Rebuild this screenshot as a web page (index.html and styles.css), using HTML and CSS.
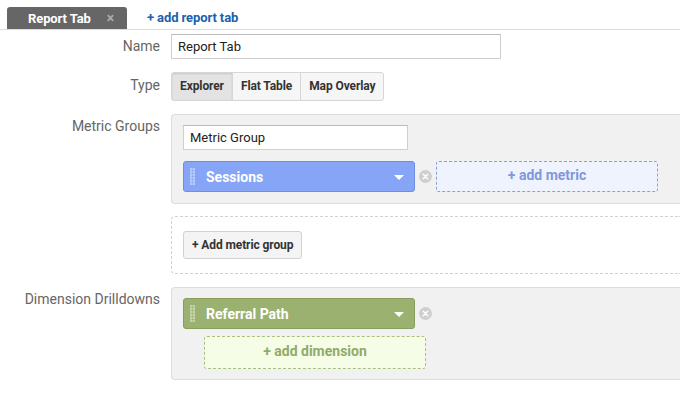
FILE: index.html
```html
<!DOCTYPE html>
<html>
<head>
<meta charset="utf-8">
<link rel="stylesheet" href="styles.css">
</head>
<body>
<div class="tabbar">
  <div class="tab"><span class="tab-name">Report Tab</span><span class="tab-x">×</span></div>
  <a class="add-tab">+ add report tab</a>
</div>
<div class="form">
  <div class="row row-name">
    <div class="label">Name</div>
    <div class="field"><div class="input input-name">Report Tab</div></div>
  </div>
  <div class="row row-type">
    <div class="label">Type</div>
    <div class="field">
      <div class="seg">
        <span class="seg-btn active">Explorer</span><span class="seg-btn">Flat Table</span><span class="seg-btn">Map Overlay</span>
      </div>
    </div>
  </div>
  <div class="row row-metrics">
    <div class="label">Metric Groups</div>
    <div class="field">
      <div class="panel panel-metric">
        <div class="input input-group">Metric Group</div>
        <div class="chip-row">
          <div class="chip chip-blue">
            <span class="grip"></span><span class="chip-text">Sessions</span><span class="caret"></span>
          </div>
          <span class="remove"><svg viewBox="0 0 13 13" width="13" height="13"><circle cx="6.5" cy="6.5" r="6.5" fill="#cfcfcf"/><path d="M4.3 4.3 L8.7 8.7 M8.7 4.3 L4.3 8.7" stroke="#fff" stroke-width="1.5" stroke-linecap="round"/></svg></span>
          <div class="adder adder-blue">+ add metric</div>
        </div>
      </div>
    </div>
  </div>
  <div class="row row-addgroup">
    <div class="label"></div>
    <div class="field">
      <div class="panel-dashed">
        <span class="btn">+ Add metric group</span>
      </div>
    </div>
  </div>
  <div class="row row-dims">
    <div class="label">Dimension Drilldowns</div>
    <div class="field">
      <div class="panel panel-dim">
        <div class="chip-row">
          <div class="chip chip-green">
            <span class="grip"></span><span class="chip-text">Referral Path</span><span class="caret"></span>
          </div>
          <span class="remove"><svg viewBox="0 0 13 13" width="13" height="13"><circle cx="6.5" cy="6.5" r="6.5" fill="#cfcfcf"/><path d="M4.3 4.3 L8.7 8.7 M8.7 4.3 L4.3 8.7" stroke="#fff" stroke-width="1.5" stroke-linecap="round"/></svg></span>
        </div>
        <div class="adder adder-green">+ add dimension</div>
      </div>
    </div>
  </div>
</div>
</body>
</html>
```
FILE: styles.css
```css
html, body {
  margin: 0;
  padding: 0;
  background: #fff;
  font-family: Roboto, "Liberation Sans", Arial, sans-serif;
  color: #333;
  overflow: hidden;
}
.tabbar {
  display: flex;
  align-items: flex-end;
  padding: 7px 0 0 7px;
  height: 22px;
  border-bottom: 1px solid #dcdcdc;
}
.tab {
  width: 120px;
  height: 22px;
  box-sizing: border-box;
  background: #666;
  border-radius: 3px 3px 0 0;
  display: flex;
  align-items: center;
  padding-left: 21px;
  color: #fff;
  font-weight: 700;
  font-size: 13px;
  letter-spacing: -0.1px;
}
.tab-x {
  color: #aaa;
  font-size: 14px;
  margin-left: 16px;
  font-weight: 700;
}
.add-tab {
  color: #2060ae;
  font-weight: 700;
  font-size: 13px;
  margin-left: 20px;
  height: 22px;
  line-height: 22px;
  letter-spacing: -0.1px;
}
.form {
  display: flex;
  flex-direction: column;
}
.row {
  display: flex;
}
.label {
  width: 161px;
  box-sizing: border-box;
  padding-right: 1px;
  text-align: right;
  color: #666;
  font-size: 14px;
  flex-shrink: 0;
}
.field {
  flex: 1;
  padding-left: 10px;
}
.row-name { margin-top: 4px; }
.row-name .label { line-height: 25px; }
.input {
  box-sizing: border-box;
  height: 25px;
  border: 1px solid #cfcfcf;
  border-top-color: #bbb;
  background: #fff;
  font-size: 13px;
  color: #222;
  padding-left: 6px;
  line-height: 23px;
}
.input-name { width: 330px; }
.row-type { margin-top: 13px; }
.row-type .label { line-height: 26px; }
.seg {
  display: inline-flex;
  height: 29px;
}
.seg-btn {
  box-sizing: border-box;
  height: 29px;
  line-height: 27px;
  border: 1px solid #d6d6d6;
  background: #f6f6f6;
  font-size: 12px;
  font-weight: 700;
  color: #333;
  padding: 0 8px;
  margin-left: -1px;
  letter-spacing: -0.1px;
}
.seg-btn:first-child { margin-left: 0; border-radius: 3px 0 0 3px; }
.seg-btn:last-child { border-radius: 0 3px 3px 0; }
.seg-btn.active {
  background: #e3e3e3;
  box-shadow: inset 0 1px 2px rgba(0,0,0,0.12);
}
.row-metrics { margin-top: 13px; }
.row-metrics .label, .row-dims .label { padding-top: 4px; line-height: 17px; }
.panel {
  background: #f1f1f1;
  border: 1px solid #dcdcdc;
  border-right: none;
  border-radius: 4px 0 0 4px;
  box-sizing: border-box;
  padding: 10px 0 11px 11px;
}
.input-group { width: 225px; margin-bottom: 11px; }
.chip-row {
  display: flex;
  align-items: center;
}
.chip {
  box-sizing: border-box;
  width: 232px;
  height: 31px;
  border-radius: 3px;
  display: flex;
  align-items: center;
  color: #fff;
  font-weight: 700;
  font-size: 14px;
}
.chip-blue {
  background: #86a5f6;
  border: 1px solid #6f8ee0;
}
.chip-green {
  background: #9bb16f;
  border: 1px solid #879d5d;
}
.grip {
  width: 5px;
  height: 17px;
  margin-left: 6px;
  margin-right: 11px;
  background-image: radial-gradient(circle, rgba(255,255,255,0.7) 0.9px, transparent 1.2px);
  background-size: 3px 3px;
  background-position: -0.5px -0.5px;
}
.chip-text { flex: 1; }
.caret {
  width: 0;
  height: 0;
  border-left: 5px solid transparent;
  border-right: 5px solid transparent;
  border-top: 5px solid #fff;
  margin-right: 10px;
  margin-top: 2px;
}
.remove {
  width: 13px;
  height: 13px;
  margin-left: 4px;
  display: flex;
}
.adder {
  box-sizing: border-box;
  height: 31px;
  border-radius: 3px;
  font-weight: 700;
  font-size: 14px;
  text-align: center;
}
.adder-blue {
  width: 222px;
  margin-left: 4px;
  background: #eef3fd;
  border: 1px dashed #8c9fd8;
  color: #8198db;
  line-height: 27px;
}
.row-addgroup { margin-top: 12px; }
.panel-dashed {
  box-sizing: border-box;
  height: 58px;
  border: 1px dashed #d2d2d2;
  border-right: none;
  border-radius: 4px 0 0 4px;
  padding: 14px 0 0 11px;
}
.btn {
  display: inline-block;
  box-sizing: border-box;
  height: 28px;
  line-height: 26px;
  padding: 0 8px;
  border: 1px solid #d2d2d2;
  border-radius: 3px;
  background: #f4f4f4;
  font-size: 12px;
  font-weight: 700;
  color: #333;
  letter-spacing: -0.1px;
}
.row-dims { margin-top: 13px; }
.panel-dim { padding-bottom: 10px; }
.adder-green {
  width: 222px;
  height: 33px;
  margin: 7px 0 0 21px;
  background: #f5fde7;
  border: 1px dashed #a9bf82;
  color: #92aa69;
  line-height: 29px;
}
```
